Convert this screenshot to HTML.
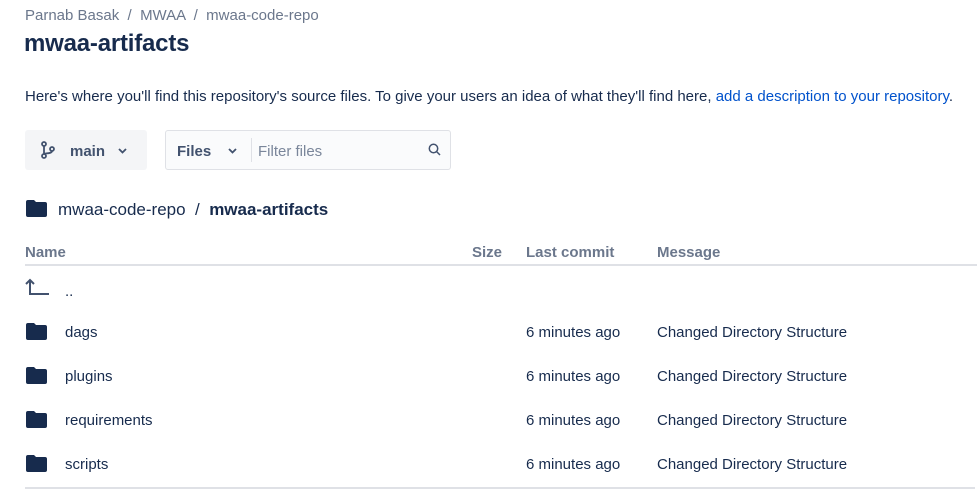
<!DOCTYPE html>
<html><head><style>
body{margin:0;width:977px;height:502px;background:#fff;font-family:"Liberation Sans",sans-serif;color:#172b4d;position:relative;overflow:hidden}
.a{position:absolute;white-space:nowrap}
.fold{position:absolute;width:21px;height:17px}
.t{font-size:15px}
</style></head><body>
<div class="a" style="left:25px;top:7px;font-size:15px;color:#6b778c">Parnab Basak &nbsp;/&nbsp; MWAA &nbsp;/&nbsp; mwaa-code-repo</div>
<div class="a" style="left:24px;top:30px;font-size:24px;font-weight:bold;letter-spacing:-0.2px">mwaa-artifacts</div>
<div class="a" style="left:25px;top:88px;font-size:15px">Here's where you'll find this repository's source files. To give your users an idea of what they'll find here, <span style="color:#0052cc">add a description to your repository</span>.</div>
<div class="a" style="left:25px;top:130px;width:122px;height:40px;background:#f4f5f7;border-radius:3px"></div>
<svg class="a" style="left:40px;top:141px" width="16" height="18" viewBox="0 0 16 18" fill="none" stroke="#42526e" stroke-width="1.8"><circle cx="4" cy="3" r="2"/><circle cx="4" cy="15" r="2"/><circle cx="12" cy="8" r="2"/><path d="M4 5v8M12 10c0 3-8 2-8 3"/></svg>
<div class="a" style="left:70px;top:143px;font-size:15px;font-weight:bold;color:#42526e">main</div>
<svg class="a" style="left:118px;top:148px" width="9" height="6" viewBox="0 0 9 6" fill="none" stroke="#42526e" stroke-width="1.8"><path d="M1 1l3.5 3.5L8 1"/></svg>
<div class="a" style="left:165px;top:130px;width:284px;height:38px;border:1px solid #dfe1e6;border-radius:3px;background:#fafbfc"></div>
<div class="a" style="left:177px;top:143px;font-size:15px;font-weight:bold;color:#42526e">Files</div>
<svg class="a" style="left:228px;top:148px" width="9" height="6" viewBox="0 0 9 6" fill="none" stroke="#42526e" stroke-width="1.8"><path d="M1 1l3.5 3.5L8 1"/></svg>
<div class="a" style="left:251px;top:138px;width:1px;height:24px;background:#dfe1e6"></div>
<div class="a" style="left:258px;top:143px;font-size:15px;color:#7a869a">Filter files</div>
<svg class="a" style="left:428px;top:143px" width="13" height="13" viewBox="0 0 13 13" fill="none" stroke="#42526e" stroke-width="1.5"><circle cx="5.5" cy="5.5" r="4.2"/><path d="M8.5 8.5l3.5 3.5"/></svg>
<svg class="fold" style="left:26px;top:200px" viewBox="0 0 21 17"><path d="M0 2a2 2 0 0 1 2-2h6l2 2h9a2 2 0 0 1 2 2v11a2 2 0 0 1-2 2H2a2 2 0 0 1-2-2z" fill="#172b4d"/></svg>
<div class="a" style="left:58px;top:200px;font-size:17px">mwaa-code-repo &nbsp;/&nbsp; <b>mwaa-artifacts</b></div>
<div class="a" style="left:25px;top:244px;font-size:15px;font-weight:bold;color:#6b778c">Name</div>
<div class="a" style="left:472px;top:244px;font-size:15px;font-weight:bold;color:#6b778c">Size</div>
<div class="a" style="left:526px;top:244px;font-size:15px;font-weight:bold;color:#6b778c">Last commit</div>
<div class="a" style="left:657px;top:244px;font-size:15px;font-weight:bold;color:#6b778c">Message</div>
<div class="a" style="left:25px;top:264px;width:952px;height:2px;background:#dfe1e6"></div>
<svg class="a" style="left:25px;top:278px" width="24" height="18" viewBox="0 0 24 18" fill="none" stroke="#42526e" stroke-width="2"><path d="M5 17V2M1 6l4-4 4 4M5 16h19"/></svg>
<div class="a t" style="left:65px;top:283px">..</div>

<svg class="fold" style="left:26px;top:323px" viewBox="0 0 21 17"><path d="M0 2a2 2 0 0 1 2-2h6l2 2h9a2 2 0 0 1 2 2v11a2 2 0 0 1-2 2H2a2 2 0 0 1-2-2z" fill="#172b4d"/></svg>
<div class="a t" style="left:65px;top:324px">dags</div>
<div class="a t" style="left:526px;top:324px">6 minutes ago</div>
<div class="a t" style="left:657px;top:324px">Changed Directory Structure</div>

<svg class="fold" style="left:26px;top:367px" viewBox="0 0 21 17"><path d="M0 2a2 2 0 0 1 2-2h6l2 2h9a2 2 0 0 1 2 2v11a2 2 0 0 1-2 2H2a2 2 0 0 1-2-2z" fill="#172b4d"/></svg>
<div class="a t" style="left:65px;top:368px">plugins</div>
<div class="a t" style="left:526px;top:368px">6 minutes ago</div>
<div class="a t" style="left:657px;top:368px">Changed Directory Structure</div>

<svg class="fold" style="left:26px;top:411px" viewBox="0 0 21 17"><path d="M0 2a2 2 0 0 1 2-2h6l2 2h9a2 2 0 0 1 2 2v11a2 2 0 0 1-2 2H2a2 2 0 0 1-2-2z" fill="#172b4d"/></svg>
<div class="a t" style="left:65px;top:412px">requirements</div>
<div class="a t" style="left:526px;top:412px">6 minutes ago</div>
<div class="a t" style="left:657px;top:412px">Changed Directory Structure</div>

<svg class="fold" style="left:26px;top:455px" viewBox="0 0 21 17"><path d="M0 2a2 2 0 0 1 2-2h6l2 2h9a2 2 0 0 1 2 2v11a2 2 0 0 1-2 2H2a2 2 0 0 1-2-2z" fill="#172b4d"/></svg>
<div class="a t" style="left:65px;top:456px">scripts</div>
<div class="a t" style="left:526px;top:456px">6 minutes ago</div>
<div class="a t" style="left:657px;top:456px">Changed Directory Structure</div>
<div class="a" style="left:25px;top:487px;width:950px;height:2px;background:#dfe1e6"></div>
</body></html>
